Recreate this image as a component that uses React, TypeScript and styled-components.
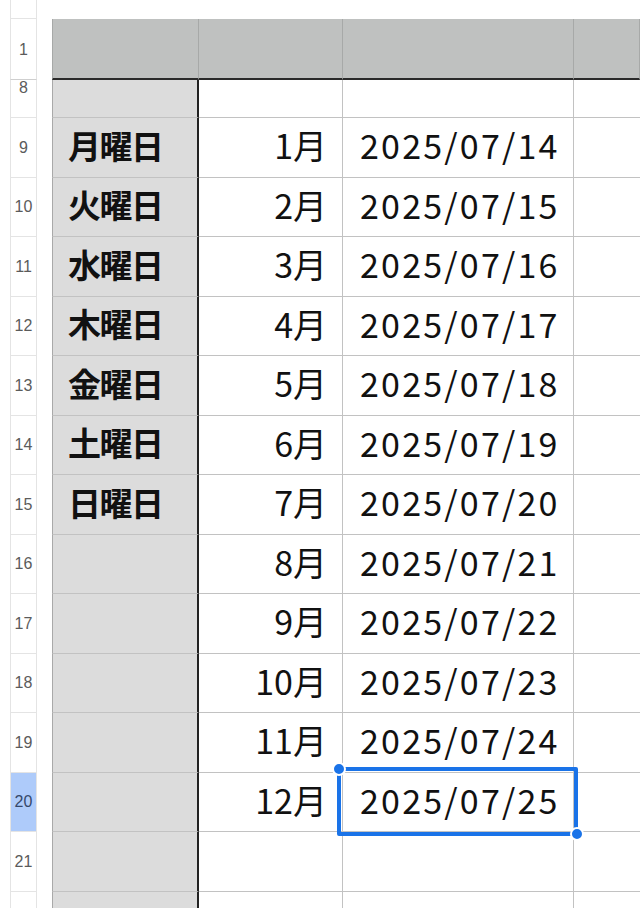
import React from "react";
import styled, { createGlobalStyle, css } from "styled-components";

const Global = createGlobalStyle`
  html, body { margin: 0; padding: 0; background: #ffffff; }
  body { font-family: "Noto Sans CJK JP", "Noto Sans", sans-serif; }
`;

const Sheet = styled.div`
  display: grid;
  grid-template-columns: 10px 27px 15px 147px 144px 231px 66px;
  grid-template-rows: 19px 61px 38px repeat(14, 59.5px);
  width: 640px;
  height: 908px;
  overflow: hidden;
  background: #ffffff;
`;

const Blank = styled.div`
  background: #ffffff;
`;

const RowHead = styled.div<{ $active?: boolean; $top?: boolean; $shadow?: boolean }>`
  box-sizing: border-box;
  border-left: 1px solid #e4e4e4;
  border-right: 1px solid #e4e4e4;
  border-bottom: 1px solid #e4e4e4;
  background: ${(p) => (p.$active ? "#aecbfa" : "#ffffff")};
  color: ${(p) => (p.$active ? "#35486a" : "#5b5b5b")};
  font-family: "Liberation Sans", Arial, sans-serif;
  font-size: 16px;
  display: flex;
  justify-content: center;
  align-items: ${(p) => (p.$top ? "flex-start" : "center")};
  padding-top: ${(p) => (p.$top ? "1px" : "0")};
  line-height: 13px;
  ${(p) =>
    p.$shadow &&
    css`
      border-bottom: 1px solid #cfcfcf;
    `}
`;

const HeadCell = styled.div<{ $first?: boolean }>`
  box-sizing: border-box;
  background: #bfc1c0;
  border-right: 1px solid #a7a9a8;
  border-bottom: 2px solid #2a2a2a;
  ${(p) => p.$first && css`border-left: 1px solid #a7a9a8;`}
`;

const CellBase = styled.div`
  box-sizing: border-box;
  border-bottom: 1px solid #c2c2c2;
  display: flex;
  align-items: center;
  white-space: nowrap;
  color: #111111;
  padding-bottom: 5px;
`;

const DayCell = styled(CellBase)`
  background: #dcdcdc;
  border-left: 1px solid #a9a9a9;
  border-right: 2px solid #222222;
  padding-left: 15px;
  font-size: 33px;
  font-weight: 700;
  font-feature-settings: "palt";
  letter-spacing: -1.5px;
`;

const MonthCell = styled(CellBase)`
  border-right: 1px solid #c2c2c2;
  justify-content: flex-end;
  padding-right: 15px;
  font-size: 34px;
`;

const DateCell = styled(CellBase)`
  position: relative;
  border-right: 1px solid #c2c2c2;
  padding-left: 17px;
  font-size: 34px;
  letter-spacing: 2.2px;
`;

const EmptyCell = styled(CellBase)``;

const Selection = styled.div`
  position: absolute;
  top: -6px;
  left: -6px;
  right: -5px;
  bottom: -5px;
  border: 4px solid #1a73e8;
  border-radius: 2px;
  z-index: 3;
  pointer-events: none;
`;

const Handle = styled.span<{ $pos: "tl" | "br" }>`
  position: absolute;
  width: 10px;
  height: 10px;
  border-radius: 50%;
  background: #1a73e8;
  border: 2px solid #ffffff;
  ${(p) =>
    p.$pos === "tl"
      ? css`top: -9px; left: -9px;`
      : css`bottom: -9px; right: -10px;`}
`;

const days = ["月曜日", "火曜日", "水曜日", "木曜日", "金曜日", "土曜日", "日曜日"];

type RowData = { num: number; day?: string; month?: string; date?: string };

const rows: RowData[] = [];
for (let i = 0; i < 14; i++) {
  const num = 9 + i;
  if (i < 12) {
    rows.push({
      num,
      day: days[i],
      month: `${i + 1}月`,
      date: `2025/07/${String(14 + i).padStart(2, "0")}`,
    });
  } else {
    rows.push({ num });
  }
}

export default function App() {
  return (
    <>
      <Global />
      <Sheet>
        {/* top blank row */}
        <Blank />
        <RowHead />
        <Blank />
        <Blank />
        <Blank />
        <Blank />
        <Blank />

        {/* header row 1 */}
        <Blank />
        <RowHead $shadow>1</RowHead>
        <Blank />
        <HeadCell $first />
        <HeadCell />
        <HeadCell />
        <HeadCell />

        {/* row 8 (partially scrolled) */}
        <Blank />
        <RowHead $top>8</RowHead>
        <Blank />
        <DayCell />
        <MonthCell />
        <DateCell />
        <EmptyCell />

        {rows.map((r) => (
          <React.Fragment key={r.num}>
            <Blank />
            <RowHead $active={r.num === 20}>{r.num <= 21 ? r.num : ""}</RowHead>
            <Blank />
            <DayCell>{r.day ?? ""}</DayCell>
            <MonthCell>{r.month ?? ""}</MonthCell>
            <DateCell>
              {r.date ?? ""}
              {r.num === 20 && (
                <Selection>
                  <Handle $pos="tl" />
                  <Handle $pos="br" />
                </Selection>
              )}
            </DateCell>
            <EmptyCell />
          </React.Fragment>
        ))}
      </Sheet>
    </>
  );
}
